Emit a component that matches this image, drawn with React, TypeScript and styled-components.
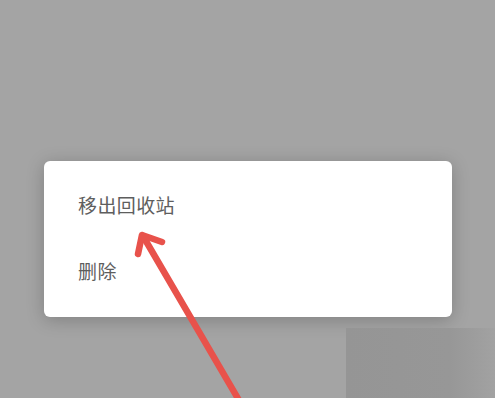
import React from 'react';
import styled, { createGlobalStyle } from 'styled-components';

const GlobalStyle = createGlobalStyle`
  html, body {
    margin: 0;
    padding: 0;
    background: #a4a4a4;
    overflow: hidden;
  }
`;

const Screen = styled.div`
  position: relative;
  width: 495px;
  height: 398px;
  overflow: hidden;
  background: #a4a4a4;
  font-family: "Noto Sans CJK SC", "Noto Sans", sans-serif;
`;

const Stage = styled.div`
  padding: 161px 0 0 44px;
`;

const Menu = styled.div`
  width: 408px;
  box-sizing: border-box;
  padding: 12px 0;
  background: #ffffff;
  border-radius: 6px;
  box-shadow: 0 3px 18px rgba(0, 0, 0, 0.22);
`;

const MenuItem = styled.div`
  height: 66px;
  box-sizing: border-box;
  display: flex;
  align-items: center;
  padding: 0 0 4px 34px;
  font-size: 19px;
  font-weight: 400;
  color: #5e5e5e;
  letter-spacing: 0.4px;
`;

const BackPanel = styled.div`
  margin: 11px 0 0 302px;
  width: 149px;
  height: 80px;
  background: linear-gradient(90deg, #959595 0%, #979797 70%, #a2a2a2 100%);
`;

const ArrowLayer = styled.svg`
  position: absolute;
  left: 0;
  top: 0;
  pointer-events: none;
`;

const items = ['移出回收站', '删除'];

const App: React.FC = () => {
  return (
    <Screen>
      <GlobalStyle />
      <Stage>
        <Menu>
          {items.map((label, i) => (
            <MenuItem key={i}>{label}</MenuItem>
          ))}
        </Menu>
        <BackPanel />
      </Stage>
      <ArrowLayer width="495" height="398" viewBox="0 0 495 398">
        <g stroke="#e8524b" strokeWidth="6.5" strokeLinecap="round" strokeLinejoin="round" fill="none">
          <line x1="240" y1="402" x2="143" y2="236" />
          <polyline points="138,254 142,235 162,242" />
        </g>
      </ArrowLayer>
    </Screen>
  );
};

export default App;
